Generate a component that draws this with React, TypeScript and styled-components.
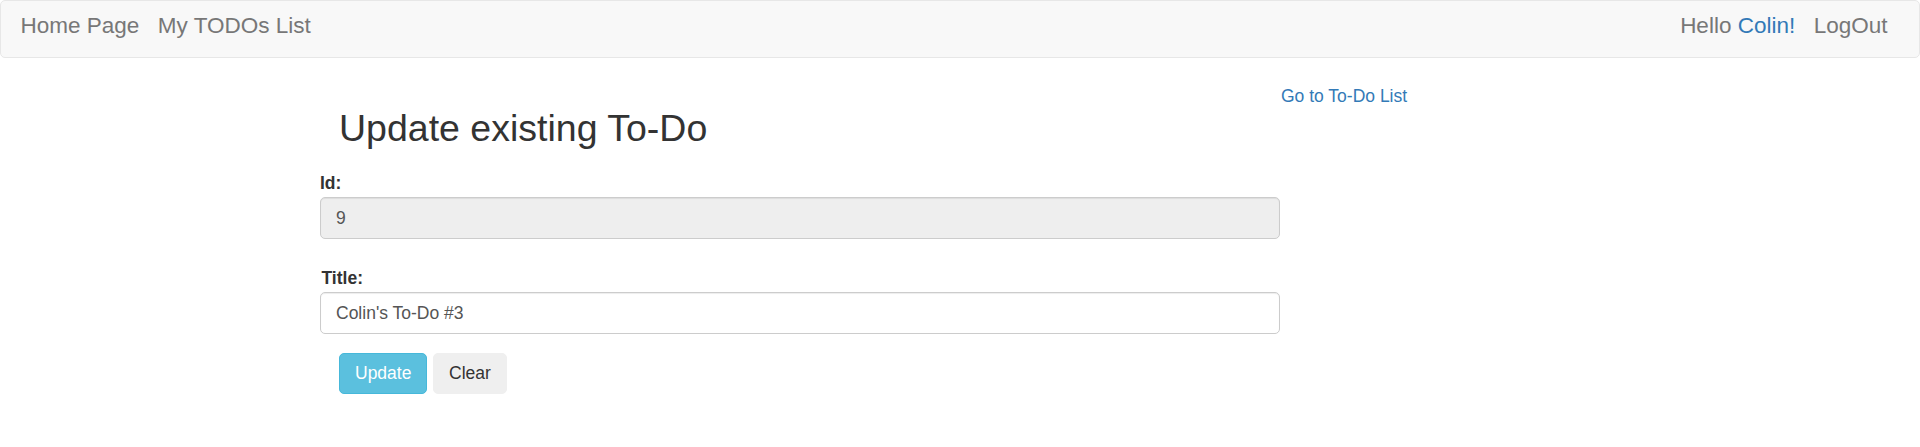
import styled, { createGlobalStyle } from "styled-components";

const GlobalStyle = createGlobalStyle`
    html, body {
        margin: 0;
        padding: 0;
        background: #fff;
    }
    body {
        font-family: "Liberation Sans", Arial, sans-serif;
        font-size: 17.5px;
        line-height: 25px;
        color: #333;
    }
    * {
        box-sizing: border-box;
    }
`

const NavBar = styled.nav`
    display: flex;
    justify-content: space-between;
    align-items: flex-start;
    height: 58px;
    padding: 11.6px 31.5px 0 19.5px;
    background: #f8f8f8;
    border: 1px solid #e7e7e7;
    border-radius: 5px;
    font-size: 22.5px;
    line-height: 25px;
    color: #777;
`

const NavGroup = styled.div`
    display: flex;
    gap: 18.5px;
`

const NavLink = styled.a`
    color: #777;
    text-decoration: none;
    cursor: pointer;
`

const UserName = styled.span`
    color: #337ab7;
`

const Main = styled.main`
    display: flex;
    align-items: flex-start;
    padding: 25px 0 0 320px;
`

const FormColumn = styled.div`
    width: 960px;
`

const Title = styled.h2`
    margin: 25px 0 21.75px;
    padding-left: 19px;
    font-size: 37.5px;
    line-height: 41.25px;
    font-weight: 500;
    color: #333;
`

const FormGroup = styled.div<{ $gap: number }>`
    margin-bottom: ${p => p.$gap}px;
`

const Label = styled.label<{ $indent?: number }>`
    display: block;
    margin-bottom: 1px;
    padding-left: ${p => p.$indent ?? 0}px;
    font-weight: bold;
    line-height: 25px;
`

const Input = styled.input`
    display: block;
    width: 100%;
    height: 42px;
    padding: 0 15px;
    font-family: inherit;
    font-size: 17.5px;
    color: #555;
    background: #fff;
    border: 1px solid #ccc;
    border-radius: 5px;
    box-shadow: inset 0 1px 1px rgba(0, 0, 0, .075);
    outline: none;

    &:disabled {
        background: #eee;
        color: #555;
        opacity: 1;
    }
`

const ButtonRow = styled.div`
    display: flex;
    gap: 5.6px;
    padding-left: 19px;
`

const Button = styled.button<{ $variant: "info" | "plain" }>`
    height: 41px;
    padding: 0 15px;
    font-family: inherit;
    font-size: 17.5px;
    line-height: 25px;
    border-radius: 5px;
    cursor: pointer;
    color: ${p => p.$variant === "info" ? "#fff" : "#333"};
    background: ${p => p.$variant === "info" ? "#5bc0de" : "#efefef"};
    border: 1px solid ${p => p.$variant === "info" ? "#46b8da" : "#efefef"};
`

const SideLink = styled.a`
    display: block;
    padding-left: 1px;
    color: #337ab7;
    text-decoration: none;
    line-height: 25px;
    margin-top: 1px;
`

const App = (): JSX.Element => {
    return(
        <>
            <GlobalStyle />
            <NavBar>
                <NavGroup>
                    <NavLink>Home Page</NavLink>
                    <NavLink>My TODOs List</NavLink>
                </NavGroup>
                <NavGroup>
                    <span>Hello <UserName>Colin!</UserName></span>
                    <NavLink>LogOut</NavLink>
                </NavGroup>
            </NavBar>
            <Main>
                <FormColumn>
                    <Title>Update existing To-Do</Title>
                    <FormGroup $gap={27}>
                        <Label>Id:</Label>
                        <Input value="9" disabled readOnly />
                    </FormGroup>
                    <FormGroup $gap={18.6}>
                        <Label $indent={1.5}>Title:</Label>
                        <Input defaultValue="Colin's To-Do #3" />
                    </FormGroup>
                    <ButtonRow>
                        <Button $variant="info">Update</Button>
                        <Button $variant="plain">Clear</Button>
                    </ButtonRow>
                </FormColumn>
                <SideLink>Go to To-Do List</SideLink>
            </Main>
        </>
    )
};

export default App
